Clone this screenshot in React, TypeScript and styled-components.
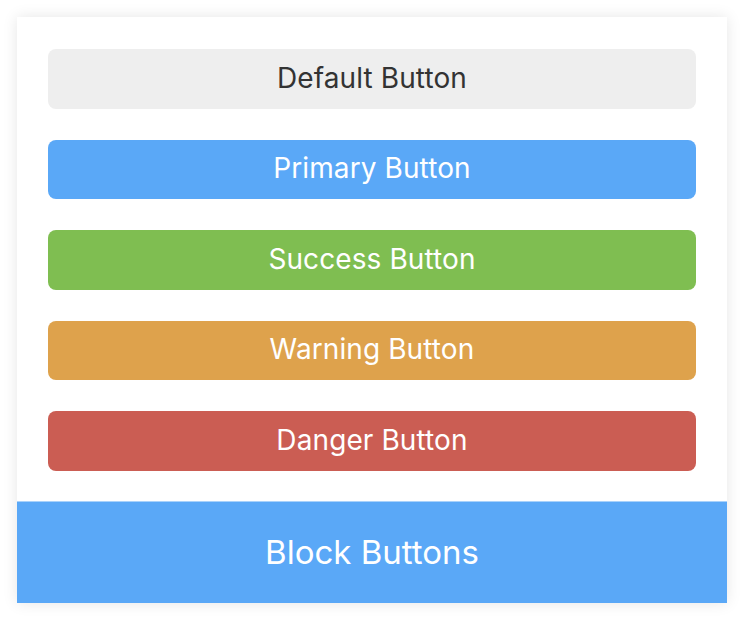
import styled, { createGlobalStyle } from 'styled-components';

const GlobalStyle = createGlobalStyle`
  html, body {
    margin: 0;
    padding: 0;
    background: #ffffff;
    font-family: Inter, "Noto Sans", sans-serif;
  }
`;

type Variant = 'default' | 'primary' | 'success' | 'warning' | 'danger';

const palette: Record<Variant, { bg: string; fg: string }> = {
  default: { bg: '#eeeeee', fg: '#333333' },
  primary: { bg: '#5aa8f7', fg: '#ffffff' },
  success: { bg: '#7fbe51', fg: '#ffffff' },
  warning: { bg: '#dea24c', fg: '#ffffff' },
  danger: { bg: '#cb5d53', fg: '#ffffff' },
};

const buttons: { variant: Variant; label: string }[] = [
  { variant: 'default', label: 'Default Button' },
  { variant: 'primary', label: 'Primary Button' },
  { variant: 'success', label: 'Success Button' },
  { variant: 'warning', label: 'Warning Button' },
  { variant: 'danger', label: 'Danger Button' },
];

export default function App() {
  return (
    <>
      <GlobalStyle />
      <Page>
        <Card>
          <ButtonList>
            {buttons.map(({ variant, label }) => (
              <Button key={variant} variant={variant}>
                {label}
              </Button>
            ))}
          </ButtonList>
          <BlockButton>Block Buttons</BlockButton>
        </Card>
      </Page>
    </>
  );
}

const Page = styled.div`
  padding: 17px 19px 17px 17px;
`;

const Card = styled.div`
  background: #ffffff;
  width: 710px;
  box-shadow: 0 0 14px rgba(0, 0, 0, 0.1);
  display: flex;
  flex-direction: column;
`;

const ButtonList = styled.div`
  display: flex;
  flex-direction: column;
  gap: 31px;
  padding: 32px 31px 30.5px;
`;

const Button = styled.button<{ variant: Variant }>`
  height: 59.5px;
  border: none;
  border-radius: 8px;
  background: ${p => palette[p.variant].bg};
  color: ${p => palette[p.variant].fg};
  font-family: Inter, "Noto Sans", sans-serif;
  font-size: 28px;
  font-weight: 400;
  letter-spacing: 0.1px;
  display: flex;
  align-items: center;
  justify-content: center;
  padding: 0 0 2px;
`;

const BlockButton = styled.button`
  height: 102px;
  border: none;
  border-top: 1px solid #a9d2fb;
  background: #5aa8f7;
  color: #ffffff;
  font-family: Inter, "Noto Sans", sans-serif;
  font-size: 33px;
  font-weight: 400;
  display: flex;
  align-items: center;
  justify-content: center;
  padding: 0 0 2px;
`;
